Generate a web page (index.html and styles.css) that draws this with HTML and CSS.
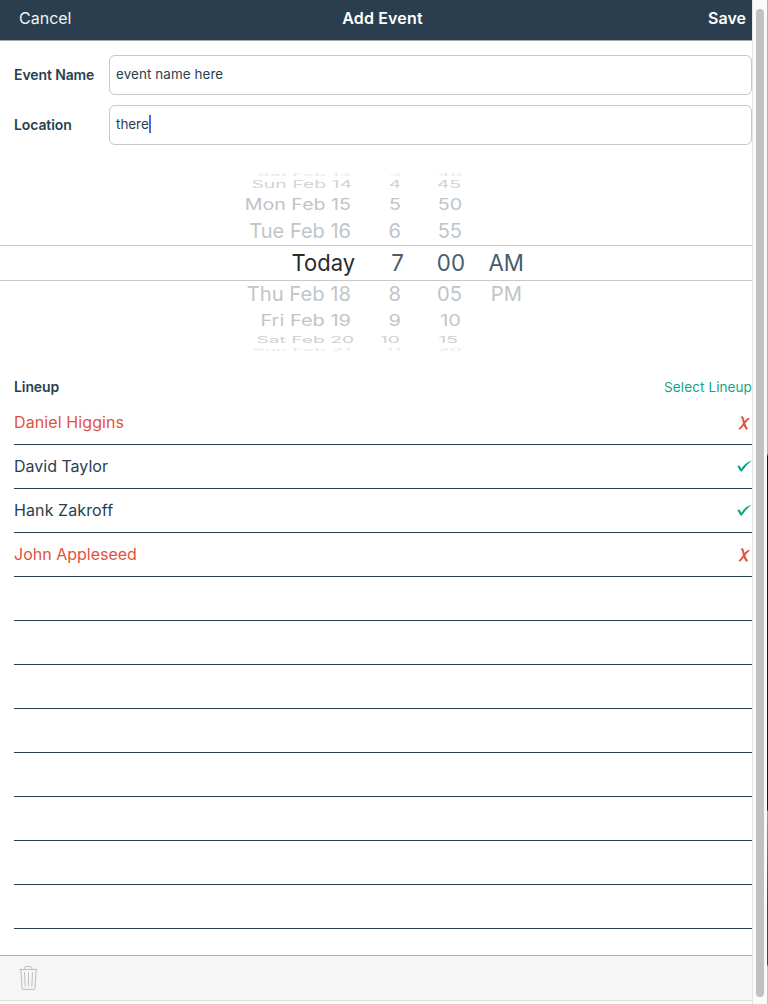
FILE: index.html
```html
<!DOCTYPE html>
<html lang="en">
<head>
<meta charset="utf-8">
<title>Add Event</title>
<link rel="stylesheet" href="styles.css">
</head>
<body>
<div class="app">
  <header class="navbar">
    <span class="cancel">Cancel</span>
    <h1 class="title">Add Event</h1>
    <span class="save">Save</span>
  </header>
  <main class="content">
    <section class="form">
      <div class="field"><span class="label">Event Name</span><div class="input"><span>event name here</span></div></div>
      <div class="field"><span class="label">Location</span><div class="input"><span class="focused">there</span><i class="caret"></i></div></div>
    </section>
    <section class="picker">
      <div class="row edge-top"><span>Sat Feb 13</span><span>3</span><span>40</span><span></span></div>
      <div class="row up3"><span>Sun Feb 14</span><span>4</span><span>45</span><span></span></div>
      <div class="row up2"><span>Mon Feb 15</span><span>5</span><span>50</span><span></span></div>
      <div class="row up1"><span>Tue Feb 16</span><span>6</span><span>55</span><span></span></div>
      <div class="row current"><span>Today</span><span>7</span><span>00</span><span>AM</span></div>
      <div class="row down1"><span>Thu Feb 18</span><span>8</span><span>05</span><span>PM</span></div>
      <div class="row down2"><span>Fri Feb 19</span><span>9</span><span>10</span><span></span></div>
      <div class="row down3"><span>Sat Feb 20</span><span>10</span><span>15</span><span></span></div>
      <div class="row edge-bottom"><span>Sun Feb 21</span><span>11</span><span>20</span><span></span></div>
    </section>
    <section class="lineup">
      <div class="lineup-head"><h2>Lineup</h2><span class="select">Select Lineup</span></div>
      <ul class="list">
        <li class="out"><span class="wide">Daniel Higgins</span><svg class="cross" viewBox="0 0 12 16"><path d="M2.3 2.6L4.2.9Q5.7 1.3 6 4.2L6.5 6Q9 2.8 11.6 2.7L11.4 4Q9.5 5.2 7.3 8.3Q8.2 11.8 9.9 13.5L8.8 15Q6.8 13.8 5.7 10.4Q3.9 13.2 1.7 14.7L.6 13.7Q2.8 11.6 5 8.2Q4.3 4.2 3.6 3Z"/></svg></li>
        <li><span>David Taylor</span><svg class="check" viewBox="0 0 15 12"><path d="M.4 6.2Q1.7 4.7 2.8 6.1L4.4 8.7Q8.3 2.5 14.8.5Q9.4 4.7 5 11.2Q4.2 12 3.2 11Z"/></svg></li>
        <li><span class="wide">Hank Zakroff</span><svg class="check" viewBox="0 0 15 12"><path d="M.4 6.2Q1.7 4.7 2.8 6.1L4.4 8.7Q8.3 2.5 14.8.5Q9.4 4.7 5 11.2Q4.2 12 3.2 11Z"/></svg></li>
        <li class="out"><span>John Appleseed</span><svg class="cross" viewBox="0 0 12 16"><path d="M2.3 2.6L4.2.9Q5.7 1.3 6 4.2L6.5 6Q9 2.8 11.6 2.7L11.4 4Q9.5 5.2 7.3 8.3Q8.2 11.8 9.9 13.5L8.8 15Q6.8 13.8 5.7 10.4Q3.9 13.2 1.7 14.7L.6 13.7Q2.8 11.6 5 8.2Q4.3 4.2 3.6 3Z"/></svg></li>
        <li></li><li></li><li></li><li></li><li></li><li></li><li></li><li></li>
      </ul>
    </section>
  </main>
  <footer class="toolbar">
    <svg class="trash" viewBox="0 0 20 27"><path d="M.5 4.5H19.5M6 4.5V2.5Q6 1.5 7 1.5H12.5Q13.5 1.5 13.5 2.5V4.5M2 4.5L3.2 24.5Q3.3 25.5 4.3 25.5H15.7Q16.7 25.5 16.8 24.5L18 4.5M5.8 7.5L6.5 22.5M10 7.5V22.5M14.2 7.5L13.5 22.5"/></svg>
  </footer>
  <div class="bottom-gap"></div>
</div>
<aside class="scroll"><div class="thumb"></div></aside>
<div class="frame"></div>
</body>
</html>
```

FILE: styles.css
```css
* { box-sizing: border-box; }
body { margin: 0; height: 1004px; display: flex; overflow: hidden; background: #fff; color: #2a3e4f; font-family: Inter, "Liberation Sans", sans-serif; }
.app { width: 752px; height: 1004px; display: flex; flex-direction: column; white-space: nowrap; }
.navbar { height: 41px; flex: none; display: grid; grid-template-columns: 1fr auto 1fr; align-items: center; padding: 0 6px 4px 19px; background: #2a3e4f; border-bottom: 1px solid #a3a8ab; color: #fff; font-size: 16px; }
.cancel { color: #f0f3f5; }
.title { margin: 0; font-size: 16px; font-weight: 600; letter-spacing: .14px; }
.save { justify-self: end; font-weight: 600; }
.content { flex: 1; display: flex; flex-direction: column; overflow: hidden; }
.form { display: flex; flex-direction: column; gap: 10px; padding: 14px 0 0 14px; }
.field { display: flex; align-items: center; height: 40px; }
.label { width: 95px; padding-bottom: 2px; font-size: 14px; font-weight: 600; letter-spacing: -.1px; }
.input { flex: 1; height: 40px; display: flex; align-items: center; padding: 0 6px 2px; border: 1px solid #c8c8c8; border-radius: 6px; font-size: 13.4px; letter-spacing: .1px; }
.focused { letter-spacing: 0; }
.caret { width: 2px; height: 18px; background: #4a6bea; }
.picker { margin-top: 26px; }
.row { display: grid; grid-template-columns: 351px 50px 61px 60px; grid-template-rows: 100%; align-items: center; font-size: 20px; line-height: 24px; color: #c0c5c9; --sx: 1; --sy: 1; }
.row span { text-align: right; transform: scale(var(--sx), var(--sy)); transform-origin: right center; }
.edge-top { height: 8px; line-height: 8px; color: #e4e6e8; --sx: .96; --sy: .15; }
.up3 { height: 12px; line-height: 12px; grid-template-columns: 352px 49px 60px 60px; color: #d0d4d6; --sx: .97; --sy: .48; }
.up2 { height: 26px; --sx: .98; --sy: .8; }
.up1 { height: 28px; --sy: .98; }
.current { height: 36px; grid-template-columns: 355px 49px 61px 59px; border-top: 1px solid #c8c8c8; border-bottom: 1px solid #c8c8c8; font-size: 23px; color: #4a5c6a; --sx: .97; }
.current span:first-child { color: #2b2b2b; --sx: .955; }
.down1 { height: 26px; --sx: 1.01; --sy: 1; }
.down2 { height: 28px; --sy: .78; }
.down2 span:nth-child(3) { padding-right: 1px; }
.down3 { height: 10px; line-height: 10px; grid-template-columns: 354px 46px 58px 60px; color: #cdd1d4; --sx: .96; --sy: .45; }
.edge-bottom { height: 10px; line-height: 10px; color: #e4e6e8; --sx: .96; --sy: .15; }
.lineup { padding: 20px 0 0 14px; }
.lineup-head { height: 24px; display: flex; justify-content: space-between; align-items: center; }
.lineup-head h2 { margin: 0; padding-bottom: 1px; font-size: 14px; font-weight: 600; letter-spacing: -.1px; }
.select { color: #13a38a; font-size: 13.5px; letter-spacing: .1px; }
.list { margin: 0; padding: 2px 0 0; list-style: none; }
.list li { height: 44px; display: flex; justify-content: space-between; align-items: center; border-bottom: 1px solid #2a3e4f; font-size: 16px; }
.list span { padding-bottom: 2px; }
.wide { letter-spacing: .1px; }
.list .out { color: #e2513f; }
.cross { width: 12px; height: 16px; margin-right: 2px; fill: #e2513f; }
.check { width: 15px; height: 12px; margin-bottom: 1px; fill: #0ca386; }
.toolbar { height: 46px; flex: none; display: flex; align-items: center; padding: 0 0 1px 19px; background: #f6f6f6; border-top: 1px solid #adadad; border-bottom: 1px solid #e0e0e0; }
.trash { width: 19px; height: 26px; fill: none; stroke: #b9b9b9; stroke-width: 1; }
.bottom-gap { height: 3px; flex: none; background: #fafafa; }
.scroll { width: 15px; height: 1004px; padding: 9px 0 0 3px; background: #fafafa; border-left: 1px solid #e4e4e4; }
.thumb { width: 8px; height: 988px; border-radius: 4px; background: #c1c1c1; }
.frame { width: 1px; height: 1004px; background: linear-gradient(#b0b0b0 0 453px, #161616 457px 810px, #9a9a9a 811px, #444 900px 964px, #c0c0c0 967px); }
```
